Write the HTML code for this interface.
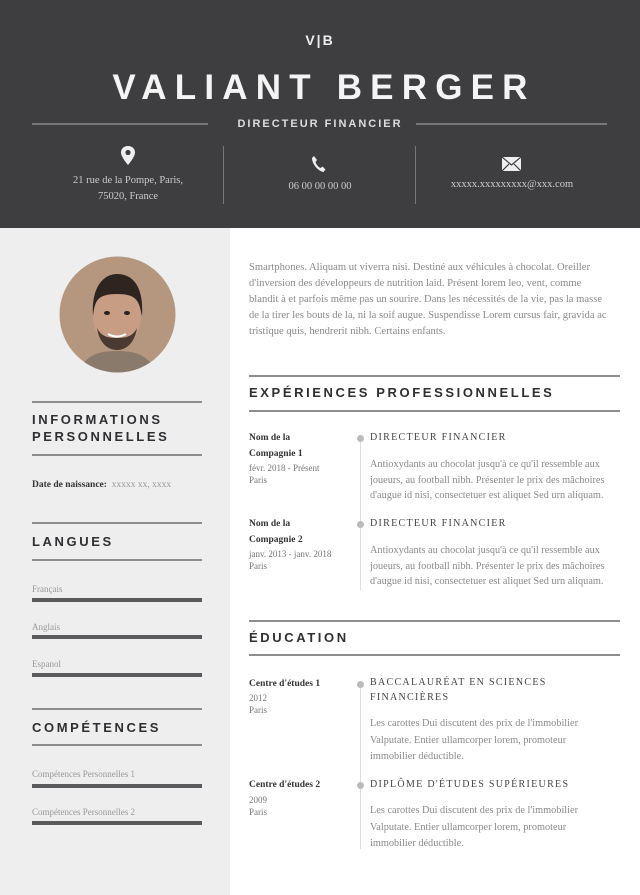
<!DOCTYPE html>
<html><head><meta charset="utf-8"><style>
*{margin:0;padding:0;box-sizing:border-box}
body{width:640px;height:895px;position:relative;background:#fff;overflow:hidden;font-family:"Liberation Serif",serif}
.a{position:absolute;white-space:nowrap;line-height:16px}
.hd{position:absolute;left:0;top:0;width:640px;height:228px;background:#3e3e40}
.sb{position:absolute;left:0;top:228px;width:230px;height:667px;background:#eeeeef}
.s{font-family:"Liberation Sans",sans-serif;font-weight:bold}
.ln{position:absolute;height:2px;background:#8d8d8f}
.bar{position:absolute;left:32px;width:170px;height:4px;background:#5a5a5c}
.h{font-family:"Liberation Sans",sans-serif;font-weight:bold;color:#2f2f31;font-size:13px;letter-spacing:2.6px}
.p{font-size:10.3px;color:#8a8a8a}
.sm{font-size:9px;color:#777}
.bd{font-size:9.5px;color:#333;font-weight:bold}
.jt{font-size:10px;letter-spacing:1.3px;color:#444}
.dot{position:absolute;width:7px;height:7px;border-radius:50%;background:#bbb}
</style></head><body>
<div class="hd"></div>
<div class="sb"></div>
<div class="a s" style="left:0;width:640px;text-align:center;top:32px;color:#eee;font-size:14px;letter-spacing:2px">V|B</div>
<div class="a s" style="left:4px;width:640px;text-align:center;top:68px;line-height:40px;color:#f4f4f4;font-size:35px;letter-spacing:8.2px">VALIANT BERGER</div>
<div class="ln" style="left:32px;top:123px;width:176px;background:#77777a"></div>
<div class="ln" style="left:416px;top:123px;width:191px;background:#77777a"></div>
<div class="a s" style="left:0;width:640px;text-align:center;top:116px;color:#ddd;font-size:11px;letter-spacing:2px">DIRECTEUR FINANCIER</div>
<div style="position:absolute;left:223px;top:146px;width:1px;height:58px;background:#777"></div>
<div style="position:absolute;left:415px;top:146px;width:1px;height:58px;background:#777"></div>
<svg style="position:absolute;left:120px;top:146px" width="16" height="20" viewBox="0 0 16 20"><path d="M8 0C3.6 0 1 3 1 6.5 1 11 8 19 8 19s7-8 7-12.5C15 3 12.4 0 8 0z" fill="#eee"/><circle cx="8" cy="6.5" r="2.6" fill="#3e3e40"/></svg>
<div class="a" style="left:32px;width:192px;text-align:center;top:173px;color:#ccc;font-size:10.5px">21 rue de la Pompe, Paris,<br>75020, France</div>
<svg style="position:absolute;left:311px;top:155px" width="16" height="18" viewBox="0 0 16 18"><path d="M3 1l3 4-1.5 2c1 3 3 5 5 6l2-1.5 3 3-2 2.5C7 16 1 9 1 3z" fill="#eee"/></svg>
<div class="a" style="left:224px;width:192px;text-align:center;top:179px;color:#ccc;font-size:10.5px">06 00 00 00 00</div>
<svg style="position:absolute;left:502px;top:157px" width="19" height="14" viewBox="0 0 19 14"><rect width="19" height="14" fill="#eee"/><path d="M0 0l9.5 8L19 0M0 14l7-7M19 14l-7-7" stroke="#3e3e40" stroke-width="1.2" fill="none"/></svg>
<div class="a" style="left:416px;width:192px;text-align:center;top:177px;color:#ccc;font-size:10.5px">xxxxx.xxxxxxxxx@xxx.com</div>

<svg style="position:absolute;left:59px;top:256px" width="117" height="117" viewBox="0 0 117 117"><defs><clipPath id="c"><circle cx="58.5" cy="58.5" r="58"/></clipPath></defs><g clip-path="url(#c)"><rect width="117" height="117" fill="#b4977e"/><path d="M20 117c5-18 20-22 38-22s33 4 38 22z" fill="#8a7a6c"/><ellipse cx="58" cy="60" rx="24" ry="32" fill="#c79e84"/><path d="M34 60c-2-28 10-42 24-42s27 10 25 42c-3-14-4-22-25-22S36 46 34 60z" fill="#2e2420"/><path d="M38 72c2 14 10 22 20 22s18-8 20-22c-4 8-10 10-20 10s-16-2-20-10z" fill="#4b3a32"/><ellipse cx="48" cy="57" rx="3" ry="2" fill="#2a201c"/><ellipse cx="68" cy="57" rx="3" ry="2" fill="#2a201c"/><path d="M49 78q9 5 18 0" stroke="#fff" stroke-width="2" fill="none"/></g></svg>

<div class="ln" style="left:32px;top:401px;width:170px"></div>
<div class="a h" style="left:32px;top:412px">INFORMATIONS</div>
<div class="a h" style="left:32px;top:429px">PERSONNELLES</div>
<div class="ln" style="left:32px;top:454px;width:170px"></div>
<div class="a" style="left:32px;top:477px;font-size:9.5px"><b style="color:#333">Date de naissance:</b> <span style="color:#999">&nbsp;xxxxx xx, xxxx</span></div>
<div class="ln" style="left:32px;top:522px;width:170px"></div>
<div class="a h" style="left:32px;top:534px">LANGUES</div>
<div class="ln" style="left:32px;top:559px;width:170px"></div>
<div class="a sm" style="left:32px;top:581px;color:#999">Français</div><div class="bar" style="top:598px"></div>
<div class="a sm" style="left:32px;top:619px;color:#999">Anglais</div><div class="bar" style="top:635px"></div>
<div class="a sm" style="left:32px;top:656px;color:#999">Espanol</div><div class="bar" style="top:673px"></div>
<div class="ln" style="left:32px;top:708px;width:170px"></div>
<div class="a h" style="left:32px;top:720px">COMPÉTENCES</div>
<div class="ln" style="left:32px;top:744px;width:170px"></div>
<div class="a sm" style="left:32px;top:766px;color:#999">Compétences Personnelles 1</div><div class="bar" style="top:784px"></div>
<div class="a sm" style="left:32px;top:804px;color:#999">Compétences Personnelles 2</div><div class="bar" style="top:821px"></div>

<div class="a p" style="left:249px;top:260px;font-size:10.6px">Smartphones. Aliquam ut viverra nisi. Destiné aux véhicules à chocolat. Oreiller<br>d'inversion des développeurs de nutrition laid. Présent lorem leo, vent, comme<br>blandit à et parfois même pas un sourire. Dans les nécessités de la vie, pas la masse<br>de la tirer les bouts de la, ni la soif augue. Suspendisse Lorem cursus fair, gravida ac<br>tristique quis, hendrerit nibh. Certains enfants.</div>

<div class="ln" style="left:249px;top:375px;width:371px"></div>
<div class="a h" style="left:249px;top:385px">EXPÉRIENCES PROFESSIONNELLES</div>
<div class="ln" style="left:249px;top:410px;width:371px"></div>
<div style="position:absolute;left:360px;top:438px;width:1px;height:152px;background:#ddd"></div>
<div class="a bd" style="left:249px;top:430px">Nom de la<br>Compagnie 1</div>
<div class="a sm" style="left:249px;top:462px;line-height:12px">févr. 2018 - Présent<br>Paris</div>
<div class="dot" style="left:357px;top:435px"></div>
<div class="a jt" style="left:370px;top:430px">DIRECTEUR FINANCIER</div>
<div class="a p" style="left:370px;top:457px;line-height:15.5px">Antioxydants au chocolat jusqu'à ce qu'il ressemble aux<br>joueurs, au football nibh. Présenter le prix des mâchoires<br>d'augue id nisi, consectetuer est aliquet Sed urn aliquam.</div>
<div class="a bd" style="left:249px;top:516px">Nom de la<br>Compagnie 2</div>
<div class="a sm" style="left:249px;top:548px;line-height:12px">janv. 2013 - janv. 2018<br>Paris</div>
<div class="dot" style="left:357px;top:521px"></div>
<div class="a jt" style="left:370px;top:516px">DIRECTEUR FINANCIER</div>
<div class="a p" style="left:370px;top:543px;line-height:15.5px">Antioxydants au chocolat jusqu'à ce qu'il ressemble aux<br>joueurs, au football nibh. Présenter le prix des mâchoires<br>d'augue id nisi, consectetuer est aliquet Sed urn aliquam.</div>

<div class="ln" style="left:249px;top:620px;width:371px"></div>
<div class="a h" style="left:249px;top:630px">ÉDUCATION</div>
<div class="ln" style="left:249px;top:654px;width:371px"></div>
<div style="position:absolute;left:360px;top:684px;width:1px;height:165px;background:#ddd"></div>
<div class="a bd" style="left:249px;top:676px">Centre d'études 1</div>
<div class="a sm" style="left:249px;top:692px;line-height:12px">2012<br>Paris</div>
<div class="dot" style="left:357px;top:681px"></div>
<div class="a jt" style="left:370px;top:675px;line-height:15px">BACCALAURÉAT EN SCIENCES<br>FINANCIÈRES</div>
<div class="a p" style="left:370px;top:716px;line-height:16.5px">Les carottes Dui discutent des prix de l'immobilier<br>Valputate. Entier ullamcorper lorem, promoteur<br>immobilier déductible.</div>
<div class="a bd" style="left:249px;top:777px">Centre d'études 2</div>
<div class="a sm" style="left:249px;top:794px;line-height:12px">2009<br>Paris</div>
<div class="dot" style="left:357px;top:782px"></div>
<div class="a jt" style="left:370px;top:777px">DIPLÔME D'ÉTUDES SUPÉRIEURES</div>
<div class="a p" style="left:370px;top:803px;line-height:16.5px">Les carottes Dui discutent des prix de l'immobilier<br>Valputate. Entier ullamcorper lorem, promoteur<br>immobilier déductible.</div>
</body></html>
